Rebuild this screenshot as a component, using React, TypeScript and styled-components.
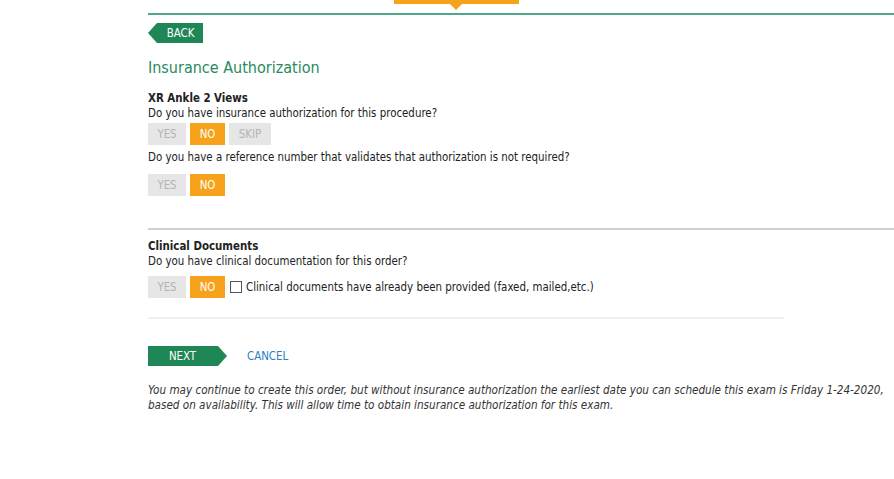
import * as React from "react";
import styled, { createGlobalStyle } from "styled-components";

const GlobalStyle = createGlobalStyle`
  html, body {
    margin: 0;
    padding: 0;
    background: #ffffff;
  }
  body {
    font-family: "DejaVu Sans Condensed", "DejaVu Sans", Tahoma, sans-serif;
    font-size: 11.4px;
    color: #222222;
  }
`;

const Page = styled.div`
  width: 894px;
  height: 479px;
  overflow: hidden;
  padding-left: 148px;
  box-sizing: border-box;
`;

const TopBar = styled.div`
  position: relative;
  height: 13px;
  border-bottom: 2px solid #4fa88a;
`;

const StepTab = styled.div`
  position: absolute;
  left: 246px;
  top: 0;
  width: 125px;
  height: 4px;
  background: #f5a31a;
  &::after {
    content: "";
    position: absolute;
    left: 56px;
    top: 4px;
    border-left: 6px solid transparent;
    border-right: 6px solid transparent;
    border-top: 6px solid #f5a31a;
  }
`;

const ArrowButton = styled.button<{ $dir: "left" | "right"; $width: number }>`
  display: flex;
  align-items: center;
  justify-content: center;
  width: ${(p) => p.$width}px;
  height: 20px;
  border: none;
  padding: ${(p) => (p.$dir === "left" ? "0 0 0 10px" : "0 10px 0 0")};
  background: #1f8656;
  color: #ffffff;
  font-family: inherit;
  font-size: 11.4px;
  cursor: pointer;
  clip-path: ${(p) =>
    p.$dir === "left"
      ? "polygon(9px 0, 100% 0, 100% 100%, 9px 100%, 0 50%)"
      : "polygon(0 0, calc(100% - 9px) 0, 100% 50%, calc(100% - 9px) 100%, 0 100%)"};
`;

const BackRow = styled.div`
  margin-top: 8px;
`;

const Title = styled.h2`
  margin: 15px 0 0;
  font-size: 16px;
  font-weight: normal;
  color: #2a8a5e;
`;

const Section = styled.section<{ $top: number }>`
  padding-top: ${(p) => p.$top}px;
`;

const Heading = styled.div`
  font-weight: bold;
  line-height: 15px;
`;

const Question = styled.div<{ $top?: number }>`
  line-height: 15px;
  margin-top: ${(p) => p.$top ?? 0}px;
`;

const Choices = styled.div<{ $gap: number }>`
  display: flex;
  align-items: center;
  gap: 4px;
  margin-top: ${(p) => p.$gap}px;
`;

const Choice = styled.button<{ $active?: boolean; $width: number }>`
  width: ${(p) => p.$width}px;
  height: 22px;
  border: none;
  padding: 0;
  font-family: inherit;
  font-size: 11.4px;
  cursor: pointer;
  background: ${(p) => (p.$active ? "#f7a21b" : "#e6e6e6")};
  color: ${(p) => (p.$active ? "#ffffff" : "#b4b4b4")};
`;

const CheckLabel = styled.label`
  display: flex;
  align-items: center;
  gap: 4px;
  margin-left: 1px;
  color: #222222;
`;

const CheckBox = styled.span`
  width: 10px;
  height: 10px;
  border: 1px solid #555555;
  background: #ffffff;
`;

const Spacer = styled.div<{ $h: number }>`
  height: ${(p) => p.$h}px;
`;

const Divider = styled.hr<{ $color: string; $width?: number }>`
  margin: 0;
  border: none;
  height: 2px;
  background: ${(p) => p.$color};
  width: ${(p) => (p.$width ? `${p.$width}px` : "auto")};
`;

const Actions = styled.div`
  display: flex;
  align-items: center;
  gap: 20px;
  margin-top: 27px;
`;

const CancelLink = styled.a`
  color: #2f7fc1;
  font-size: 11.4px;
  text-decoration: none;
  cursor: pointer;
`;

const Notice = styled.p`
  margin: 17px 0 0;
  font-style: italic;
  font-size: 11.6px;
  line-height: 15px;
  color: #333333;
  width: 745px;
`;

export default function App() {
  return (
    <>
      <GlobalStyle />
      <Page>
        <TopBar>
          <StepTab />
        </TopBar>
        <BackRow>
          <ArrowButton $dir="left" $width={55}>
            BACK
          </ArrowButton>
        </BackRow>
        <Title>Insurance Authorization</Title>
        <Section $top={14}>
          <Heading>XR Ankle 2 Views</Heading>
          <Question>Do you have insurance authorization for this procedure?</Question>
          <Choices $gap={2}>
            <Choice $width={38}>YES</Choice>
            <Choice $width={35} $active>
              NO
            </Choice>
            <Choice $width={42}>SKIP</Choice>
          </Choices>
          <Question $top={5}>
            Do you have a reference number that validates that authorization is not required?
          </Question>
          <Choices $gap={9}>
            <Choice $width={38}>YES</Choice>
            <Choice $width={35} $active>
              NO
            </Choice>
          </Choices>
        </Section>
        <Spacer $h={32} />
        <Divider $color="#cfcfcf" />
        <Section $top={9}>
          <Heading>Clinical Documents</Heading>
          <Question>Do you have clinical documentation for this order?</Question>
          <Choices $gap={7}>
            <Choice $width={38}>YES</Choice>
            <Choice $width={35} $active>
              NO
            </Choice>
            <CheckLabel>
              <CheckBox />
              Clinical documents have already been provided (faxed, mailed,etc.)
            </CheckLabel>
          </Choices>
        </Section>
        <Spacer $h={19} />
        <Divider $color="#f0f0f0" $width={636} />
        <Actions>
          <ArrowButton $dir="right" $width={79}>
            NEXT
          </ArrowButton>
          <CancelLink>CANCEL</CancelLink>
        </Actions>
        <Notice>
          You may continue to create this order, but without insurance authorization the earliest
          date you can schedule this exam is Friday 1-24-2020, based on availability. This will
          allow time to obtain insurance authorization for this exam.
        </Notice>
      </Page>
    </>
  );
}
